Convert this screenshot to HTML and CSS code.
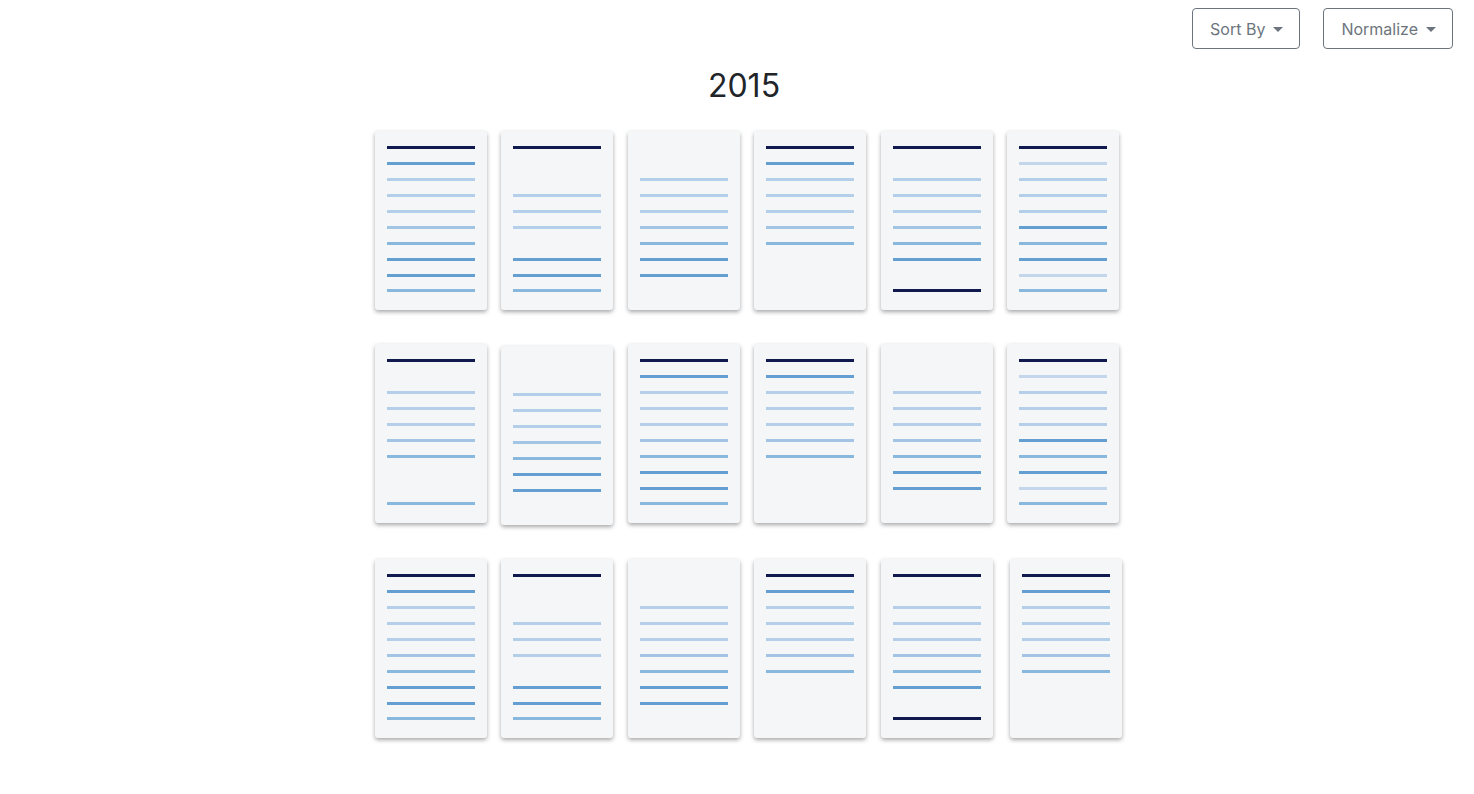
FILE: index.html
```html
<!DOCTYPE html>
<html>
   <head>
      <meta charset = "UTF-8">
      <meta name = "Viewport" content = "width=device-width, initial-scale=1.0">
      <title>2015</title>
      <link rel="stylesheet" href="styles.css">
   </head>
   <body>
      <div class = "top-bar">
         <button class = "drop-button">Sort By</button>
         <button class = "drop-button">Normalize</button>
      </div>
      <div class = "year-div">
         <h2 class = "year-title">2015</h2>
         <div class = "cards-grid js-cards"></div>
      </div>
      <script>
         // one letter per slot: d dark, s strong, m medium, n light-medium, l light, x lightest, - empty
         const patterns = {
            A: 'dslllnmssm',
            B: 'd--lll-ssm',
            C: '--lllnmss-',
            D: 'dslllnm---',
            E: 'd-lllnms-d',
            F: 'dxlllsmsxm',
            G: 'd-lllnm--m'
         };
         const rows = [
            ['A', 'B', 'C', 'D', 'E', 'F'],
            ['G', 'C lowered', 'A', 'D', 'C', 'F'],
            ['A', 'B', 'C', 'D', 'E', 'D shifted']
         ];
         let cardsHtml = '';
         rows.forEach((row) => {
            row.forEach((item) => {
               const parts = item.split(' ');
               const pattern = patterns[parts[0]];
               let slots = '';
               for (let i = 0; i < pattern.length; i++) {
                  const c = pattern[i];
                  if (c == '-') {
                     slots += `<div class = 'slot'></div>`;
                  } else {
                     slots += `<div class = 'slot'><div class = 'bar bar-${c}'></div></div>`;
                  }
               }
               const extra = parts[1] ? ' card-' + parts[1] : '';
               cardsHtml += `<div class = 'card${extra}'>${slots}</div>`;
            });
         });
         document.querySelector('.js-cards').innerHTML = cardsHtml;
      </script>
   </body>
</html>
```
FILE: styles.css
```css
body {
   margin: 0;
   padding-bottom: 40px;
   background-color: white;
   font-family: Inter, "Liberation Sans", Arial, sans-serif;
   color: #212529;
}
.top-bar {
   display: flex;
   justify-content: flex-end;
   gap: 23px;
   padding: 8px 21px 0 0;
}
.drop-button {
   height: 41px;
   padding: 0 16px 0 17px;
   background-color: white;
   color: #6c757d;
   font-family: Inter, "Liberation Sans", Arial, sans-serif;
   font-size: 16px;
   border: 1px solid #6c757d;
   border-radius: 4px;
}
.drop-button::after {
   content: "";
   display: inline-block;
   margin-left: 8px;
   vertical-align: 3px;
   border-top: 5px solid #6c757d;
   border-left: 5px solid transparent;
   border-right: 5px solid transparent;
}
.year-div {
   display: flex;
   flex-direction: column;
   align-items: center;
   padding-left: 20px;
}
.year-title {
   margin: 18px 6px 26px 0;
   font-size: 32px;
   font-weight: 400;
   line-height: 38px;
}
.cards-grid {
   display: grid;
   grid-template-columns: repeat(6, 112px);
   column-gap: 14.6px;
   row-gap: 34px;
}
.card {
   height: 179px;
   box-sizing: border-box;
   padding: 9px 12px 0 12px;
   background-color: #f5f6f8;
   border-radius: 3px;
   box-shadow: 0 2px 4px rgba(0, 0, 0, 0.35);
}
.card-lowered {
   margin-top: 2px;
}
.card-shifted {
   transform: translateX(3px);
}
.slot {
   height: 15.9px;
   display: flex;
   align-items: center;
}
.bar {
   width: 100%;
   height: 3px;
}
.bar-d {
   background-color: #101a4e;
}
.bar-s {
   background-color: #659fd1;
}
.bar-m {
   background-color: #89b8df;
}
.bar-n {
   background-color: #a2c5e6;
}
.bar-l {
   background-color: #b4cfea;
}
.bar-x {
   background-color: #c4d6eb;
}
```
